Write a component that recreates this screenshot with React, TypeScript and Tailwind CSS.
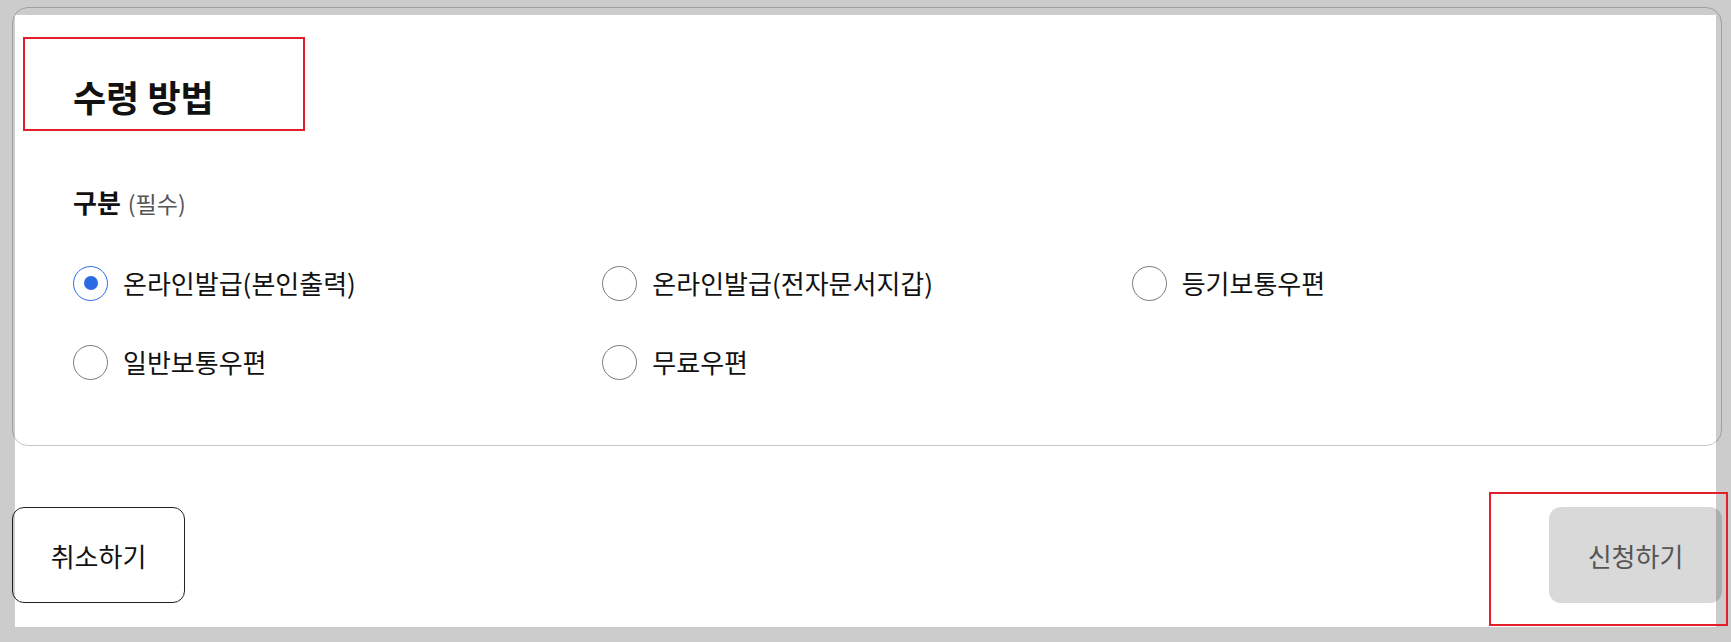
import React from "react";

const OPTIONS = [
  "온라인발급(본인출력)",
  "온라인발급(전자문서지갑)",
  "등기보통우편",
  "일반보통우편",
  "무료우편"
];

const RadioItem = ({
  label,
  checked,
  onSelect
}: {
  label: string;
  checked: boolean;
  onSelect: () => void;
}) => {
  return (
    <label
      className="flex items-center gap-[15px] h-[36px] cursor-pointer"
      onClick={onSelect}
    >
      <span
        className={
          checked
            ? "w-[35px] h-[35px] rounded-full border border-[#2b6de5] flex items-center justify-center shrink-0"
            : "w-[35px] h-[35px] rounded-full border border-[#7a7a7a] flex items-center justify-center shrink-0"
        }
      >
        {checked && <span className="w-[14px] h-[14px] rounded-full bg-[#2a6be4]" />}
      </span>
      <span className="text-[26px] leading-[36px] text-[#111]">{label}</span>
    </label>
  );
};

const App = () => {
  const [selected, setSelected] = React.useState(0);

  return (
    <div className="relative w-[1731px] h-[642px] overflow-hidden bg-white font-['Noto_Sans_CJK_KR','Noto_Sans',sans-serif]">
      <div className="pl-[12px] pr-[9px] pt-[7px]">
        {/* card */}
        <div className="border border-[#c8c8c8] rounded-[16px] px-[60px] pt-[68px] pb-[65px]">
          <h2 className="text-[36px] leading-[40px] font-bold text-[#111]">수령 방법</h2>
          <div className="mt-[71px] flex items-baseline gap-[7px] leading-[30px]">
            <span className="text-[26px] font-bold text-[#111]">구분</span>
            <span className="text-[23px] text-[#555]">(필수)</span>
          </div>
          <div className="mt-[47px] grid grid-cols-3 gap-y-[43px]">
            {OPTIONS.map((item, idx) => (
              <RadioItem
                key={item}
                label={item}
                checked={selected === idx}
                onSelect={() => setSelected(idx)}
              />
            ))}
          </div>
        </div>

        {/* buttons */}
        <div className="mt-[61px] flex justify-between">
          <button className="w-[173px] h-[96px] rounded-[12px] border border-[#222] bg-white text-[26px] text-[#111]">
            취소하기
          </button>
          <button
            className="w-[173px] h-[96px] rounded-[12px] bg-[#d9d9d9] text-[26px] text-[#555]"
            disabled
          >
            신청하기
          </button>
        </div>
      </div>

      {/* dim frame */}
      <div className="absolute inset-0 border-[15px] border-black/20 pointer-events-none" />

      {/* annotation boxes */}
      <div className="absolute left-[23px] top-[37px] w-[282px] h-[94px] border-2 border-[#e41e2b] pointer-events-none" />
      <div className="absolute left-[1489px] top-[492px] w-[239px] h-[134px] border-2 border-[#e41e2b] pointer-events-none" />
    </div>
  );
};

export default App;
